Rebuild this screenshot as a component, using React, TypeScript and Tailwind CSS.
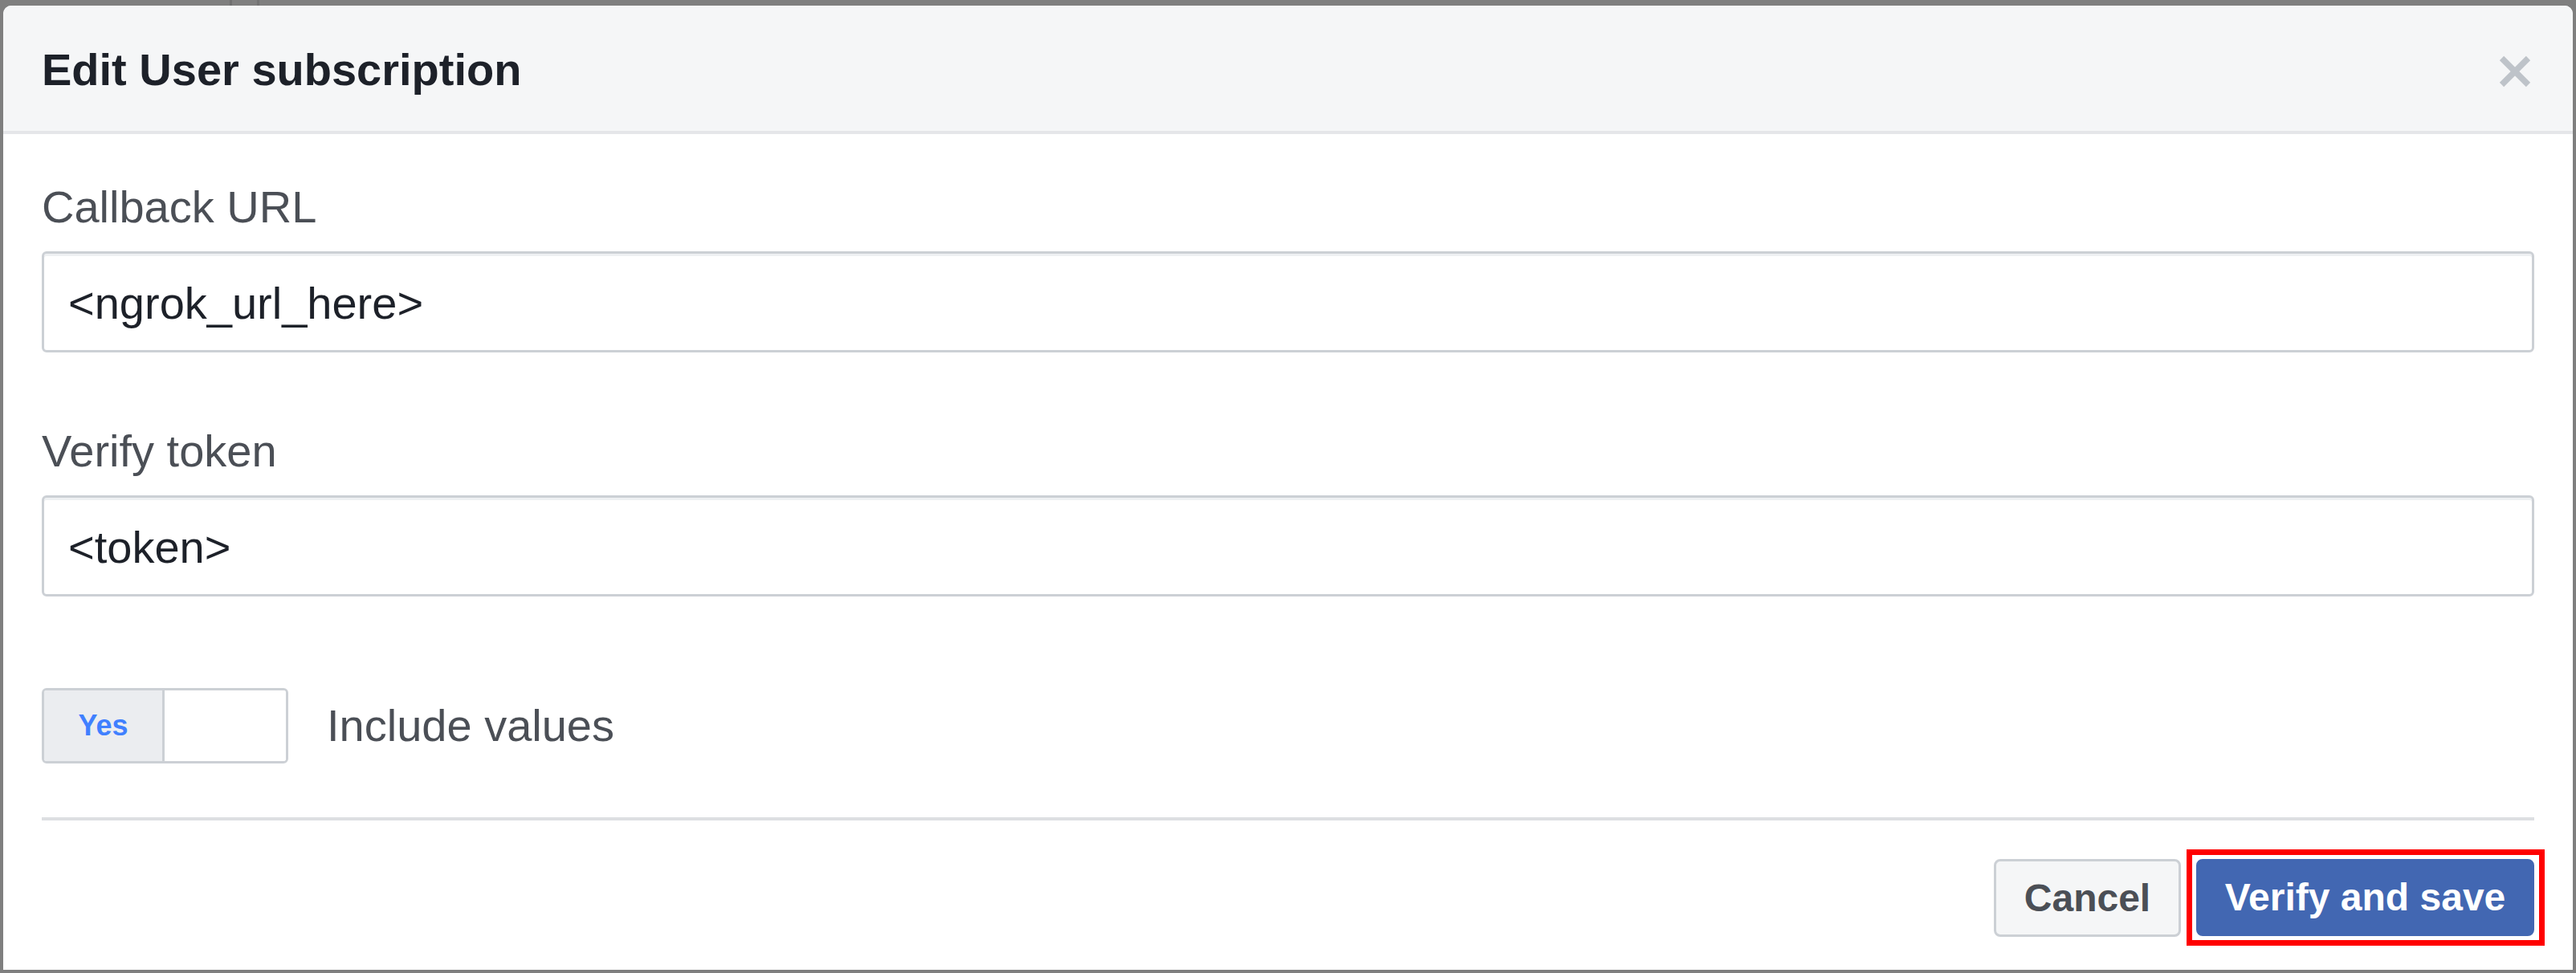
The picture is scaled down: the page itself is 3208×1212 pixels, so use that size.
import React from "react";

function CloseIcon() {
  return (
    <svg width="40" height="40" viewBox="0 0 40 40" className="mt-[4px] shrink-0">
      <line x1="3.5" y1="3.5" x2="36.5" y2="36.5" stroke="#bec3c9" strokeWidth="7.5" />
      <line x1="36.5" y1="3.5" x2="3.5" y2="36.5" stroke="#bec3c9" strokeWidth="7.5" />
    </svg>
  );
}

function Field({ label, value, mt }: { label: string; value: string; mt: string }) {
  return (
    <div className={mt}>
      <div className="text-[56px] leading-[64px] text-[#4b4f56]">{label}</div>
      <div className="mt-[23px] flex h-[126px] items-center rounded-[6px] border-[3px] border-[#ccd0d5] bg-white pl-[30px] pt-[3px] shadow-[inset_0_3px_0_#eef0f2]">
        <span className="text-[56px] leading-[64px] text-[#1d2129]">{value}</span>
      </div>
    </div>
  );
}

export default function App() {
  return (
    <div className="relative h-[1212px] w-[3208px] overflow-hidden bg-[#7f7f7f] font-['Liberation_Sans',Arial,sans-serif]">
      <div className="absolute left-[286px] top-0 h-[7px] w-[3px] bg-[#707070]" />
      <div className="absolute left-[320px] top-0 h-[7px] w-[3px] bg-[#737373]" />
      <div className="ml-[4px] pt-[7px]">
        <div className="flex h-[1201px] w-[3200px] flex-col rounded-t-[10px] bg-white">
          {/* Header */}
          <div className="flex h-[160px] items-center justify-between rounded-t-[10px] border-b-4 border-[#e5e6e9] bg-[#f5f6f7] pl-[48px] pr-[52px] pt-[4px]">
            <div className="text-[56px] font-bold leading-[64px] text-[#1d2129]">Edit User subscription</div>
            <CloseIcon />
          </div>

          {/* Body */}
          <div className="flex flex-1 flex-col px-[48px]">
            <Field label="Callback URL" value="<ngrok_url_here>" mt="mt-[59px]" />
            <Field label="Verify token" value="<token>" mt="mt-[91px]" />

            <div className="mt-[114px] flex items-center">
              <div className="flex h-[94px] w-[307px] overflow-hidden rounded-[6px] border-[3px] border-[#ccd0d5]">
                <div className="flex w-[150px] items-center justify-center border-r-[3px] border-[#ccd0d5] bg-[#ebedf0]">
                  <span className="text-[36px] font-bold leading-[40px] text-[#4080ff]">Yes</span>
                </div>
                <div className="flex-1 bg-white" />
              </div>
              <span className="ml-[48px] text-[56px] leading-[64px] text-[#4b4f56]">Include values</span>
            </div>

            <div className="mt-[67px] h-[4px] w-full bg-[#dddfe2]" />

            <div className="mt-[48px] flex justify-end gap-[19px]">
              <button className="flex h-[97px] w-[233px] items-center justify-center rounded-[8px] border-[3px] border-[#ccd0d5] bg-[#f5f6f7] text-[48px] font-bold leading-[56px] text-[#4b4f56]">
                Cancel
              </button>
              <div className="relative">
                <button className="flex h-[96px] w-[421px] items-center justify-center rounded-[8px] border-[3px] border-[#4267b2] bg-[#4267b2] text-[48px] font-bold leading-[56px] text-white">
                  Verify and save
                </button>
                <div className="pointer-events-none absolute -bottom-[11px] -left-[12px] -right-[13px] -top-[12px] border-[7px] border-[#ff0000]" />
              </div>
            </div>
          </div>
        </div>
      </div>
    </div>
  );
}
